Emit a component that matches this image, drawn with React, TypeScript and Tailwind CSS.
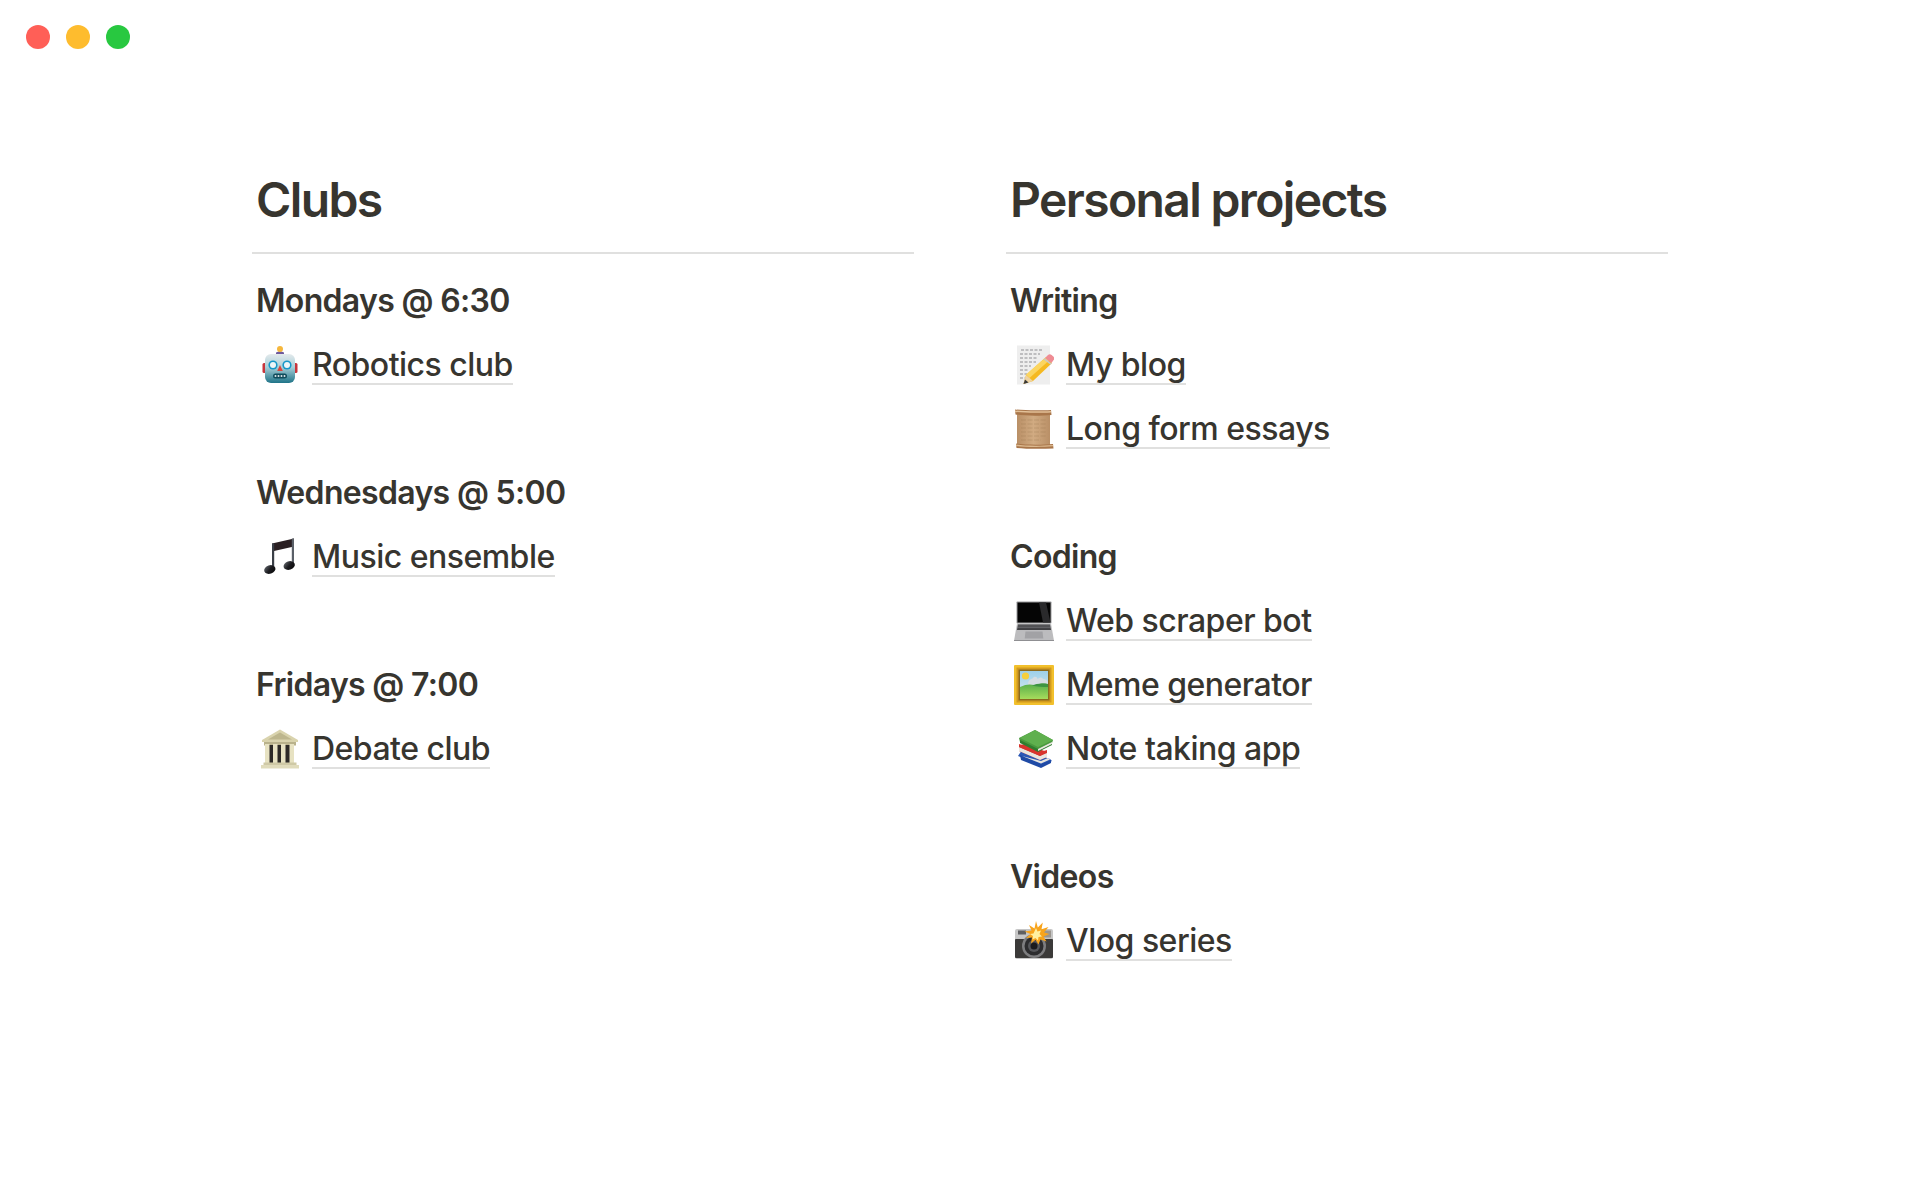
import type { ReactNode } from "react";

function Robot() {
  return (
    <svg viewBox="0 0 40 40" className="h-10 w-10">
      <defs>
        <linearGradient id="robot-head" x1="0" y1="0" x2="0" y2="1">
          <stop offset="0" stopColor="#e4eaec" />
          <stop offset="0.45" stopColor="#a9cfd8" />
          <stop offset="1" stopColor="#1f7488" />
        </linearGradient>
      </defs>
      <rect x="2.5" y="18" width="4" height="10" rx="1.5" fill="#c8343b" />
      <rect x="33.5" y="18" width="4" height="10" rx="1.5" fill="#c8343b" />
      <path d="M16 8c0-2 8-2 8 0v2h-8z" fill="#6f5a9c" />
      <circle cx="20" cy="4" r="3" fill="#f6b73c" />
      <rect x="5" y="9" width="30" height="29" rx="6" fill="url(#robot-head)" />
      <circle cx="13" cy="20" r="4.6" fill="#1697c9" />
      <circle cx="27" cy="20" r="4.6" fill="#1697c9" />
      <circle cx="13" cy="20" r="3" fill="#eef6f8" />
      <circle cx="27" cy="20" r="3" fill="#eef6f8" />
      <path d="M20 20l2.8 6h-5.6z" fill="#d9453d" />
      <rect x="13" y="28.5" width="14" height="5" rx="2.5" fill="#0f4c5c" />
      <g fill="#dfe7ea">
        <circle cx="15.5" cy="31" r="1" />
        <circle cx="18.5" cy="31" r="1" />
        <circle cx="21.5" cy="31" r="1" />
        <circle cx="24.5" cy="31" r="1" />
      </g>
    </svg>
  );
}

function MusicNotes() {
  return (
    <svg viewBox="0 0 40 40" className="h-10 w-10">
      <defs>
        <linearGradient id="note-head" x1="0" y1="0" x2="1" y2="1">
          <stop offset="0" stopColor="#6d7278" />
          <stop offset="0.5" stopColor="#1c1c20" />
          <stop offset="1" stopColor="#050506" />
        </linearGradient>
      </defs>
      <path d="M12 6.500 34 1.500v8L14 14z" fill="#2a1f22" />
      <rect x="12" y="6.500" width="2.200" height="26" fill="#3a3f47" />
      <rect x="31.800" y="1.500" width="2.200" height="26" fill="#5a6068" />
      <ellipse cx="9.800" cy="32.500" rx="5.800" ry="4.200" transform="rotate(-18 9.800 32.500)" fill="url(#note-head)" />
      <ellipse cx="29.200" cy="28.500" rx="5.800" ry="4.200" transform="rotate(-18 29.200 28.500)" fill="url(#note-head)" />
    </svg>
  );
}

function Bank() {
  return (
    <svg viewBox="0 0 40 40" className="h-10 w-10">
      <path d="M20 .5 38 11v2H2v-2z" fill="#d9d3ad" />
      <path d="M20 3.500 32 10.500H8z" fill="#bdb68d" />
      <rect x="4" y="13" width="32" height="3.500" fill="#b9b28c" />
      <rect x="7" y="16" width="27" height="20" fill="#2c2926" />
      <g fill="#e7e2c2">
        <rect x="5" y="15" width="4.500" height="20" />
        <rect x="13" y="15" width="4.500" height="20" />
        <rect x="21" y="15" width="4.500" height="20" />
        <rect x="29.500" y="15" width="4.500" height="20" />
      </g>
      <rect x="3.500" y="33.500" width="33" height="2.500" fill="#cfc9a6" />
      <rect x="1" y="36" width="38" height="3.500" fill="#e0dbbb" />
    </svg>
  );
}

function Memo() {
  return (
    <svg viewBox="0 0 40 40" className="h-10 w-10">
      <rect x="3" y="0.500" width="33" height="39" fill="#eeeeee" />
      <g stroke="#66666a" strokeWidth="0.700" strokeDasharray="3 1.500" fill="none">
        <path d="M7 5h22M6 9h20M6 13h18M6 17h16M6 21h11M6 25h9M6 29h7M6 33h5" />
      </g>
      <path d="M31.500 12.500 38 18 19 36l-9.500 3 2.500-9z" fill="#f5b921" />
      <path d="M31.500 12.500 35 15.500 15.500 33 12 29.500z" fill="#fbd560" />
      <path d="M12 30l7 6-9.500 3z" fill="#eed3a3" />
      <path d="M11 34.500l3.500 3-5 1.500z" fill="#3a3a3a" />
      <path d="M31 13l3-3c1.200-1 2.400-1 3.600 0l2 1.800c1 1.200.8 2.400-.2 3.400L37.500 18z" fill="#ef8c94" />
      <path d="M30.500 13.200 37.700 18.600 36.600 19.800 29.400 14.300z" fill="#c7c7c7" />
    </svg>
  );
}

function Scroll() {
  return (
    <svg viewBox="0 0 40 40" className="h-10 w-10">
      <defs>
        <linearGradient id="scroll-paper" x1="0" y1="0" x2="1" y2="0">
          <stop offset="0" stopColor="#b98f66" />
          <stop offset="0.5" stopColor="#d1ab82" />
          <stop offset="1" stopColor="#b98f66" />
        </linearGradient>
      </defs>
      <rect x="3" y="3" width="33" height="34" fill="url(#scroll-paper)" />
      <g stroke="#97714e" strokeWidth="0.600" strokeDasharray="5 1.500" fill="none" opacity="0.500">
        <path d="M7 11h25M7 15h25M7 19h25M7 23h25M7 27h25M7 31h20" />
      </g>
      <path d="M1 .5C10 1.500 28 1.500 37 1l.5 5C26 7 12 7 1.500 5.500z" fill="#a9764a" />
      <path d="M1 1.500C10 2.500 28 2.500 37 2v1.400C26 4 12 4 1 3z" fill="#e2c098" />
      <path d="M2 34.500c10 1.500 25 1.500 37 .5l.5 4.500c-12 .5-27 .5-37-.5z" fill="#a9764a" />
      <path d="M2 35.500c10 1.500 25 1.500 37 .5v1.300c-12 1-27 .8-37-.3z" fill="#dcb98f" />
    </svg>
  );
}

function Laptop() {
  return (
    <svg viewBox="0 0 40 40" className="h-10 w-10">
      <rect x="2.500" y="0.500" width="35" height="22" rx="0.800" fill="#9a9a9c" />
      <rect x="3.500" y="1.500" width="33" height="20" fill="#050505" />
      <path d="M25 1.500h7l4.500 20H29z" fill="#2a2a2c" />
      <path d="M3 22.500h34l3 17.500H0z" fill="#bcbcbe" />
      <path d="M4 23.500h32l1 5.500H3z" fill="#3f3f42" />
      <g stroke="#8c8c90" strokeWidth="0.500">
        <path d="M3.500 25h33M3.300 26.600h33.400" />
      </g>
      <path d="M11.500 30.500h17l.8 7H10.700z" fill="#a2a2a5" />
      <path d="M0 39h40v1H0z" fill="#8f8f92" />
    </svg>
  );
}

function Picture() {
  return (
    <svg viewBox="0 0 40 40" className="h-10 w-10">
      <defs>
        <linearGradient id="picture-sky" x1="0" y1="0" x2="0" y2="1">
          <stop offset="0" stopColor="#9ed0ea" />
          <stop offset="1" stopColor="#dcecef" />
        </linearGradient>
        <linearGradient id="picture-grass" x1="0" y1="0" x2="0" y2="1">
          <stop offset="0" stopColor="#57ad4a" />
          <stop offset="1" stopColor="#a6dc5c" />
        </linearGradient>
      </defs>
      <rect x="0" y="0" width="40" height="40" rx="1" fill="#f2c02c" />
      <rect x="2.500" y="2.500" width="35" height="35" fill="#d29a1e" />
      <rect x="4.500" y="4.500" width="31" height="31" fill="#8b6a1e" />
      <rect x="6" y="6" width="28" height="28" fill="url(#picture-sky)" />
      <circle cx="11.500" cy="11" r="3.600" fill="#f6cf3d" />
      <path d="M14 19c0-3 2-5 4.500-5.500C20 11 23 11.500 23.500 14c2-2 4.500-2 5.500 0 2 0 5 1.500 5 4v2H14z" fill="#d6dde2" />
      <path d="M6 22c6-3 10-3 14.500-2 5-1.500 9-2 13.500-1v15H6z" fill="url(#picture-grass)" />
      <path d="M18 20.500c4-1.500 9-2.500 16-1.500v3c-5 0-11 0-16-1.500z" fill="#3e9440" />
    </svg>
  );
}

function Books() {
  return (
    <svg viewBox="0 0 40 40" className="h-10 w-10">
      <path d="M4 27 27 37l11-5-2-2L8 21z" fill="#2b58b5" />
      <path d="M7 31 27 39l10-5v-3L27 35 6 26z" fill="#1f4aa5" />
      <path d="M8 27 27 34.500 36 30.500 34 29 27 32z" fill="#e8e6df" />
      <path d="M5 16 5 22 26 31 33 28 33 23 12 15z" fill="#d8342d" />
      <path d="M5 18 26 27 33 24v4l-7 3-21-9z" fill="#e8e6df" />
      <path d="M5 15 26 23 33 21 33 23 26 27 5 18z" fill="#d8342d" />
      <path d="M5 9 21 1 39 11 38 14 23 22 6 13z" fill="#4a9a3e" />
      <path d="M21 1 39 11 24 18 6 9z" fill="#5fb04e" />
      <path d="M6 11 24 20 38 13 38 16 24 23 6 14z" fill="#2f7d2f" />
      <path d="M24 20 38 13v2l-14 7z" fill="#e9e8e0" />
    </svg>
  );
}

function Camera() {
  return (
    <svg viewBox="0 0 40 40" className="h-10 w-10">
      <rect x="1" y="8" width="38" height="30" rx="2" fill="#c6c6c6" />
      <rect x="1" y="18" width="38" height="19" rx="1" fill="#3b3a39" />
      <rect x="4" y="9.500" width="8" height="4" fill="#5f5f61" />
      <rect x="28" y="9.500" width="9" height="7" fill="#9b9690" />
      <circle cx="20" cy="25" r="12" fill="#7d7d7f" />
      <circle cx="20" cy="25" r="9.500" fill="#2c2c2e" />
      <circle cx="20" cy="25" r="6" fill="#55565a" />
      <circle cx="20" cy="25" r="3.500" fill="#1b1b1d" />
      <path d="M22 0l1.800 6.500 5-5-1.300 6.800 7-2.300-4.500 5.500 5.500 1.500-6 2.500 3 5-6-2-2 5-3-4.800-4.500 3.800 1-6-6 .5 4.500-4-6-2.500 7-1-2.500-5.500 5.500 3.500z" fill="#f8a41c" />
      <path d="M22 7l1.500 3.500 3.500-1-1.500 3.500 2.500 2.500-3.500.5-.5 3.500-2.500-2.500-3 1.500.5-3.500-3-2 3.500-.5z" fill="#fff0a0" />
    </svg>
  );
}

type Row = { icon: ReactNode; label: string };
type Group = { title: string; rows: Row[] };
type Column = { title: string; groups: Group[] };

const columns: Column[] = [
  {
    title: "Clubs",
    groups: [
      { title: "Mondays @ 6:30", rows: [{ icon: <Robot />, label: "Robotics club" }] },
      { title: "Wednesdays @ 5:00", rows: [{ icon: <MusicNotes />, label: "Music ensemble" }] },
      { title: "Fridays @ 7:00", rows: [{ icon: <Bank />, label: "Debate club" }] },
    ],
  },
  {
    title: "Personal projects",
    groups: [
      {
        title: "Writing",
        rows: [
          { icon: <Memo />, label: "My blog" },
          { icon: <Scroll />, label: "Long form essays" },
        ],
      },
      {
        title: "Coding",
        rows: [
          { icon: <Laptop />, label: "Web scraper bot" },
          { icon: <Picture />, label: "Meme generator" },
          { icon: <Books />, label: "Note taking app" },
        ],
      },
      { title: "Videos", rows: [{ icon: <Camera />, label: "Vlog series" }] },
    ],
  },
];

export default function App() {
  return (
    <div className="min-h-[1200px] bg-white font-['Inter',sans-serif] text-[#37352f]">
      <div className="flex gap-4 pl-[26px] pt-[25px]">
        <span className="h-6 w-6 rounded-full bg-[#ff5f57]" />
        <span className="h-6 w-6 rounded-full bg-[#febc2e]" />
        <span className="h-6 w-6 rounded-full bg-[#28c840]" />
      </div>
      <div className="mx-auto mt-[121px] grid w-[1416px] grid-cols-2 gap-x-[92px]">
        {columns.map((col) => (
          <div key={col.title}>
            <h1 className="border-b-2 border-[#e0e0df] pb-[22px] pl-1 text-[48px] leading-[60px] font-semibold tracking-[-0.034em]">
              {col.title}
            </h1>
            <div className="mt-[15px] flex flex-col gap-16">
              {col.groups.map((group) => (
                <section key={group.title}>
                  <h3 className="h-16 pl-1 text-[32px] leading-[64px] font-semibold tracking-[-0.021em]">
                    {group.title}
                  </h3>
                  {group.rows.map((row) => (
                    <div key={row.label} className="flex h-16 items-center gap-3 pl-2">
                      <span className="shrink-0">{row.icon}</span>
                      <span className="border-b-2 border-[#e0e0df] pt-[2px] text-[32px] leading-[36px] font-[450] tracking-[-0.016em]">
                        {row.label}
                      </span>
                    </div>
                  ))}
                </section>
              ))}
            </div>
          </div>
        ))}
      </div>
    </div>
  );
}
